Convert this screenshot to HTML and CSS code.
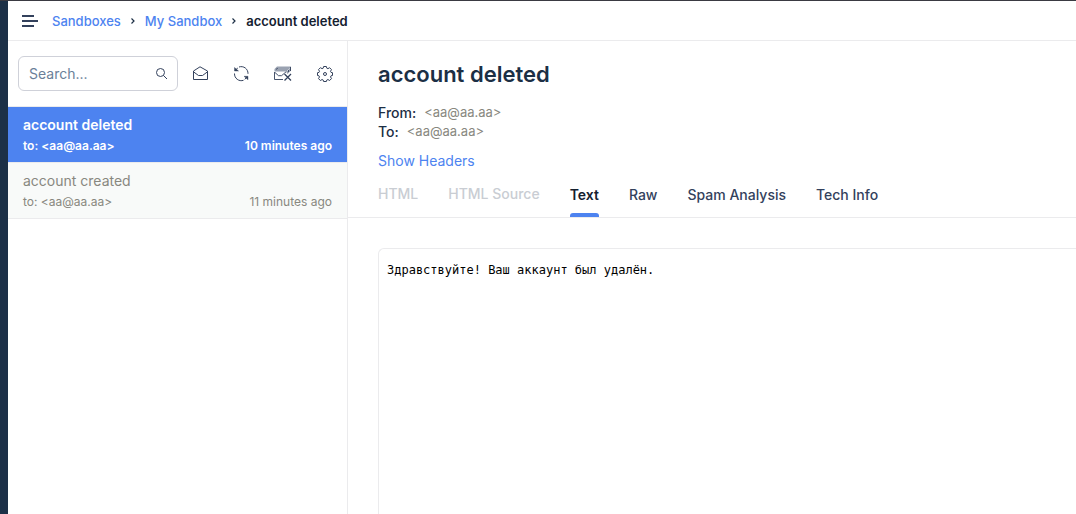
FILE: index.html
```html
<!DOCTYPE html>
<html lang="en">
<head>
<meta charset="utf-8">
<title>My Sandbox</title>
<link rel="stylesheet" href="styles.css">
</head>
<body>
<div class="app">
  <div class="rail"></div>
  <div class="page">
    <header class="topbar">
      <button class="menu" aria-label="Menu"><svg width="16" height="12" viewBox="0 0 16 12"><path d="M0 1h12M0 6h16M0 11h12" stroke="#33415c" stroke-width="2"/></svg></button>
      <nav class="crumbs" aria-label="Breadcrumb">
        <a href="#">Sandboxes</a>
        <svg width="4" height="8" viewBox="0 0 4 8"><path d="M.5 1.500 3 4 .5 6.500" fill="none" stroke="#1c2f45" stroke-width="1.200"/></svg>
        <a href="#">My Sandbox</a>
        <svg width="4" height="8" viewBox="0 0 4 8"><path d="M.5 1.500 3 4 .5 6.500" fill="none" stroke="#1c2f45" stroke-width="1.200"/></svg>
        <span class="current">account deleted</span>
      </nav>
    </header>
    <div class="columns">
      <aside class="sidebar">
        <div class="tools">
          <label class="search">
            <input type="text" placeholder="Search..." aria-label="Search">
            <svg width="13" height="14" viewBox="0 0 13 14" fill="none" stroke="#33415c"><circle cx="5.500" cy="5.500" r="4"/><path d="m8.500 8.500 3.500 3.500"/></svg>
          </label>
          <div class="actions">
            <button aria-label="Mark all as read"><svg width="16" height="16" viewBox="0 0 16 16" fill="none" stroke="#33415c" stroke-linejoin="round"><path d="M1.500 5 8 .8 15.500 5v8.500h-14zM2 6.200l4.500 3.300h4L15 6.200"/></svg></button>
            <button aria-label="Refresh"><svg width="16" height="16" viewBox="0 0 16 16" fill="none" stroke="#33415c"><path d="M6 1a6.800 6.800 0 0 1 9 6.800M10.500 14.300a6.800 6.800 0 0 1-9-6.800M3 3.600 4.800 2M13.500 11.700 11.700 13.300"/><path d="M1.500 1.500 5.500 5H1.500zM15 13.800 11 10.300h4z" fill="#33415c" stroke-width=".4"/></svg></button>
            <button aria-label="Clear inbox"><svg width="19" height="16" viewBox="0 0 19 16" fill="none" stroke="#33415c"><path d="M1.500 5.500V3L4 .5h14v4L14.500 8 13 5.500z" fill="#9aa2b1" stroke="none"/><path d="M10 13.500H1.500V6M2 6.500l3.500 3.200h3L14 5M3.500 3.500l1-1.500M15.500 3v3M17.500 1v4" stroke-width=".9"/><path d="m11.500 8 6.500 6.500M18 8l-6.500 6.500" stroke-width="1.300"/><path d="m13.500 5.500 3.500-3.500" stroke="#fff" stroke-dasharray="1.500 1"/></svg></button>
            <button aria-label="Settings"><svg width="16" height="16" viewBox="0 0 16 16" fill="none" stroke="#33415c" stroke-linejoin="round"><path d="M6.600.5h2.800l.4 1.700 1.100.5 1.700-1 1.900 1.900-1 1.700.5 1.100 1.500.3v2.800l-1.500.3-.5 1.100 1 1.700-1.900 1.900-1.700-1-1.100.5-.4 1.500H6.600l-.4-1.500-1.100-.5-1.700 1-1.900-1.900 1-1.700-.5-1.100L.5 9.500V6.700L2 6.400l.5-1.100-1-1.700 1.900-1.900 1.700 1 1.100-.5z"/><circle cx="8" cy="8" r="1.500"/></svg></button>
          </div>
        </div>
        <ul class="messages">
          <li><a class="message selected" href="#"><span class="subject">account deleted</span><span class="meta"><span>to: &lt;aa@aa.aa&gt;</span><time>10 minutes ago</time></span></a></li>
          <li><a class="message" href="#"><span class="subject">account created</span><span class="meta"><span>to: &lt;aa@aa.aa&gt;</span><time>11 minutes ago</time></span></a></li>
        </ul>
      </aside>
      <main class="detail">
        <div class="summary">
          <h1>account deleted</h1>
          <dl>
            <div><dt>From:</dt><dd>&lt;aa@aa.aa&gt;</dd></div>
            <div><dt>To:</dt><dd>&lt;aa@aa.aa&gt;</dd></div>
          </dl>
          <a class="headers" href="#">Show Headers</a>
        </div>
        <div class="tabs" role="tablist">
          <button role="tab" disabled>HTML</button>
          <button role="tab" disabled>HTML Source</button>
          <button role="tab" class="active" aria-selected="true">Text</button>
          <button role="tab">Raw</button>
          <button role="tab">Spam Analysis</button>
          <button role="tab">Tech Info</button>
        </div>
        <pre class="body">Здравствуйте! Ваш аккаунт был удалён.</pre>
      </main>
    </div>
  </div>
</div>
</body>
</html>
```
FILE: styles.css
```css
* { box-sizing: border-box; }
body { margin: 0; font-family: Inter, "Liberation Sans", sans-serif; color: #1c2f45; font-size: 14px; background: #fff; }
a { color: #4d83f0; text-decoration: none; }
button { border: 0; padding: 0; background: none; font: inherit; cursor: pointer; }
svg { display: block; flex: none; }
.app { display: flex; min-height: 100vh; border-top: 1px solid #3a3a42; }
.rail { flex: none; width: 8px; background: #1c3047; }
.page { flex: 1; min-width: 0; display: flex; flex-direction: column; }
.topbar { display: flex; align-items: center; gap: 14px; height: 40px; padding: 0 14px; border-bottom: 1px solid #ebebed; }
.crumbs { display: flex; align-items: center; gap: 10px; font-size: 13px; font-weight: 500; line-height: 16px; }
.current { font-weight: 600; color: #14202f; }
.columns { flex: 1; display: flex; }
.sidebar { flex: none; width: 340px; border-right: 1px solid #ebebed; }
.tools { display: flex; align-items: center; gap: 14px; padding: 15px 14px 15px 10px; border-bottom: 1px solid #ebebed; }
.search { flex: none; display: flex; align-items: center; width: 160px; height: 35px; padding: 0 9px 0 10px; border: 1px solid #cfd1d9; border-radius: 6px; }
.search input { flex: 1; min-width: 0; border: 0; outline: 0; padding: 0; font: inherit; color: inherit; background: none; }
.search input::placeholder { color: #6b7f99; opacity: 1; }
.actions { flex: 1; display: flex; align-items: center; justify-content: space-between; }
.messages { list-style: none; margin: 0; padding: 0; }
.message { display: flex; flex-direction: column; gap: 4px; padding: 9px 15px 8px; color: #888880; background: #f8faf9; border-bottom: 1px solid #ebebed; }
.subject { line-height: 18px; }
.meta { display: flex; justify-content: space-between; font-size: 12px; line-height: 16px; }
.message.selected { color: #fff; background: #4d83f0; font-weight: 600; }
.detail { flex: 1; min-width: 0; display: flex; flex-direction: column; }
.summary { padding: 18px 30px 0; }
h1 { margin: 0; font-size: 22px; line-height: 30px; font-weight: 600; }
dl { margin: 14px 0 10px; line-height: 19px; }
dl div { display: flex; gap: 8px; }
dt { font-weight: 500; }
dd { margin: 0; color: #888880; font-size: 13px; }
.headers { display: block; line-height: 20px; }
.tabs { display: flex; gap: 30px; padding: 6px 30px 0; border-bottom: 1px solid #ebebed; }
.tabs button { position: relative; height: 40px; padding: 0 0 6px; color: #33415c; font-weight: 500; white-space: nowrap; }
.tabs button:disabled { padding: 0 0 8px; color: #c9cdd3; cursor: default; }
.tabs .active { color: #14202f; font-weight: 600; }
.tabs .active::after { content: ""; position: absolute; left: 0; right: 0; bottom: 0; height: 4px; border-radius: 3px 3px 0 0; background: #4d83f0; }
.body { flex: 1; margin: 30px 0 0 30px; padding: 13px 8px; border: 1px solid #ebebed; border-width: 1px 0 0 1px; border-radius: 6px 0 0 0; color: #000; font: 12px/16px "DejaVu Sans Mono", monospace; white-space: pre-wrap; }
```
